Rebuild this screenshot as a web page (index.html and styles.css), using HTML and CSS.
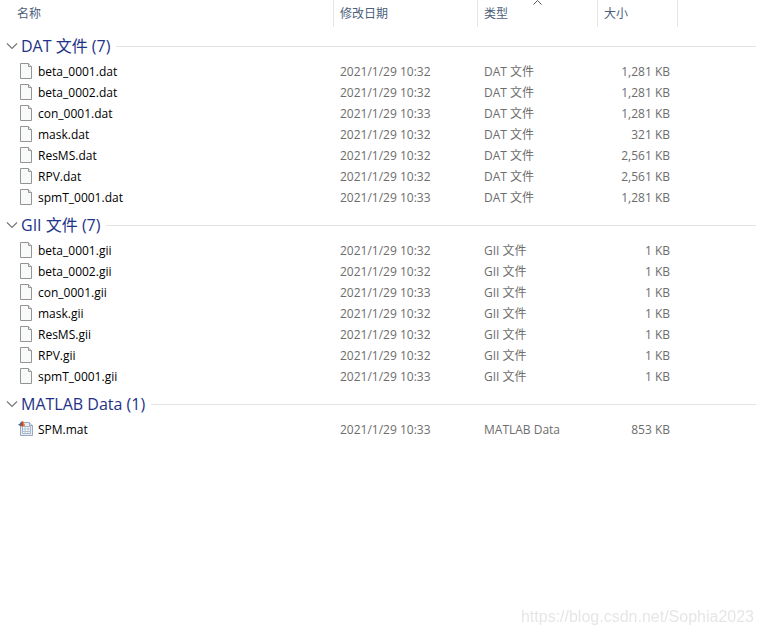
FILE: index.html
```html
<!DOCTYPE html>
<html lang="zh-CN">
<head>
    <meta charset="UTF-8">
    <meta name="viewport" content="width=device-width, initial-scale=1.0">
    <title>文件列表</title>
    <link rel="stylesheet" href="styles.css">
</head>
<body>
    <!--图标-->
    <svg class="defs">
        <symbol id="file" viewBox="0 0 14 16">
            <path d="M1.500 .5h8l3 3v12h-11z" fill="#f8f9f9" stroke="#949494"/>
            <path d="M9.500 .5v3h3" fill="#e8e8e8" stroke="#949494"/>
        </symbol>
        <symbol id="mat" viewBox="0 0 14 16" overflow="visible">
            <path d="M1.500 1.500h9l3 3v10h-12z" fill="#e6edf6" stroke="#98a9bf"/>
            <path d="M10.500 1.500v3h3" fill="#d9e4f0" stroke="#98a9bf"/>
            <path d="M3.500 5.500h8v7h-8z" fill="#fff" stroke="#a3b3c8"/>
            <path d="M3.500 8h8M3.500 10.500h8M6 5.500v7M9 5.500v7" fill="none" stroke="#b4c2d4"/>
            <path d="M-1 3.500l2-1 2-2.500v5l-2 0z" fill="#3f74ad"/>
            <path d="M1 5l1.500-3 1-2 1 1 1.500 4-1.500-.5-1.500 1.500-1-1.500z" fill="#c9421f"/>
            <path d="M3.500 0l1 1 1.500 4-1.500-.5z" fill="#eb8a3c"/>
        </symbol>
        <symbol id="arrow" viewBox="0 0 12 8">
            <path d="M1 1.500l5 5 5-5" fill="none" stroke="#777" stroke-width="1.200"/>
        </symbol>
    </svg>
    <table class="list">
        <colgroup>
            <col class="col-name">
            <col class="col-date">
            <col class="col-type">
            <col class="col-size">
            <col>
        </colgroup>
        <thead>
            <tr>
                <th class="first"><button>名称</button></th>
                <th><button>修改日期</button></th>
                <th aria-sort="ascending">
                    <button>类型</button>
                    <svg class="sort" viewBox="0 0 9 5"><path d="M.5 4.500l4-4 4 4" fill="none" stroke="#555"/></svg>
                </th>
                <th><button>大小</button></th>
                <td></td>
            </tr>
        </thead>
        <tbody>
            <tr class="group"><th colspan="5"><button><svg><use href="#arrow"/></svg>DAT 文件 (7)</button></th></tr>
            <tr><td><svg><use href="#file"/></svg>beta_0001.dat</td><td>2021/1/29 10:32</td><td>DAT 文件</td><td>1,281 KB</td></tr>
            <tr><td><svg><use href="#file"/></svg>beta_0002.dat</td><td>2021/1/29 10:32</td><td>DAT 文件</td><td>1,281 KB</td></tr>
            <tr><td><svg><use href="#file"/></svg>con_0001.dat</td><td>2021/1/29 10:33</td><td>DAT 文件</td><td>1,281 KB</td></tr>
            <tr><td><svg><use href="#file"/></svg>mask.dat</td><td>2021/1/29 10:32</td><td>DAT 文件</td><td>321 KB</td></tr>
            <tr><td><svg><use href="#file"/></svg>ResMS.dat</td><td>2021/1/29 10:32</td><td>DAT 文件</td><td>2,561 KB</td></tr>
            <tr><td><svg><use href="#file"/></svg>RPV.dat</td><td>2021/1/29 10:32</td><td>DAT 文件</td><td>2,561 KB</td></tr>
            <tr><td><svg><use href="#file"/></svg>spmT_0001.dat</td><td>2021/1/29 10:33</td><td>DAT 文件</td><td>1,281 KB</td></tr>
        </tbody>
        <tbody>
            <tr class="group"><th colspan="5"><button><svg><use href="#arrow"/></svg>GII 文件 (7)</button></th></tr>
            <tr><td><svg><use href="#file"/></svg>beta_0001.gii</td><td>2021/1/29 10:32</td><td>GII 文件</td><td>1 KB</td></tr>
            <tr><td><svg><use href="#file"/></svg>beta_0002.gii</td><td>2021/1/29 10:32</td><td>GII 文件</td><td>1 KB</td></tr>
            <tr><td><svg><use href="#file"/></svg>con_0001.gii</td><td>2021/1/29 10:33</td><td>GII 文件</td><td>1 KB</td></tr>
            <tr><td><svg><use href="#file"/></svg>mask.gii</td><td>2021/1/29 10:32</td><td>GII 文件</td><td>1 KB</td></tr>
            <tr><td><svg><use href="#file"/></svg>ResMS.gii</td><td>2021/1/29 10:32</td><td>GII 文件</td><td>1 KB</td></tr>
            <tr><td><svg><use href="#file"/></svg>RPV.gii</td><td>2021/1/29 10:32</td><td>GII 文件</td><td>1 KB</td></tr>
            <tr><td><svg><use href="#file"/></svg>spmT_0001.gii</td><td>2021/1/29 10:33</td><td>GII 文件</td><td>1 KB</td></tr>
        </tbody>
        <tbody>
            <tr class="group"><th colspan="5"><button><svg><use href="#arrow"/></svg>MATLAB Data (1)</button></th></tr>
            <tr><td><svg><use href="#mat"/></svg>SPM.mat</td><td>2021/1/29 10:33</td><td>MATLAB Data</td><td>853 KB</td></tr>
        </tbody>
    </table>
    <a class="watermark" href="https://blog.csdn.net/Sophia2023">https://blog.csdn.net/Sophia2023</a>
</body>
</html>
```
FILE: styles.css
```css
body{
    margin: 0;
    background: #fff;
    font-family: "Open Sans", "Noto Sans CJK SC", sans-serif;
    font-size: 12px;
    color: #6d6d6d;
}
button{
    border: 0;
    padding: 0;
    background: none;
    font: inherit;
    color: inherit;
    text-align: left;
}
.defs{
    display: none;
}
.list{
    width: 100%;
    table-layout: fixed;
    border-collapse: collapse;
}
.col-name{
    width: 334px;
}
.col-date{
    width: 144px;
}
.col-type{
    width: 120px;
}
.col-size{
    width: 80px;
}
th, td{
    padding: 0;
    font-weight: normal;
    text-align: left;
    white-space: nowrap;
}
thead th{
    position: relative;
    padding-bottom: 2px;
    color: #4c607a;
}
thead button{
    display: block;
    width: 100%;
    height: 27px;
    padding: 0 0 2px 6px;
    border-right: 1px solid #e5e5e5;
}
thead .first button{
    padding-left: 17px;
}
.sort{
    position: absolute;
    top: 0;
    left: 55px;
    width: 9px;
    height: 5px;
}
/*分组标题*/
.group button{
    display: flex;
    align-items: center;
    width: 100%;
    height: 32px;
    padding: 2px 7px 0 6px;
    font-size: 16px;
    line-height: 20px;
    color: #1e3287;
}
.group button::after{
    content: "";
    flex: 1;
    height: 1px;
    margin-left: 6px;
    background: #e2e2e2;
}
.group svg{
    width: 12px;
    height: 8px;
    margin-right: 3px;
}
tbody td{
    height: 21px;
    padding-left: 6px;
    line-height: 21px;
}
tbody td:first-child{
    padding-left: 19px;
    color: #000;
}
tbody td:nth-child(4){
    padding-right: 8px;
    text-align: right;
}
td svg{
    width: 14px;
    height: 16px;
    margin-right: 5px;
    vertical-align: -3px;
    overflow: visible;
}
.watermark{
    position: fixed;
    right: 9px;
    bottom: 9px;
    font: 16px "Liberation Sans", sans-serif;
    color: #e6e6e6;
    text-decoration: none;
}
```
